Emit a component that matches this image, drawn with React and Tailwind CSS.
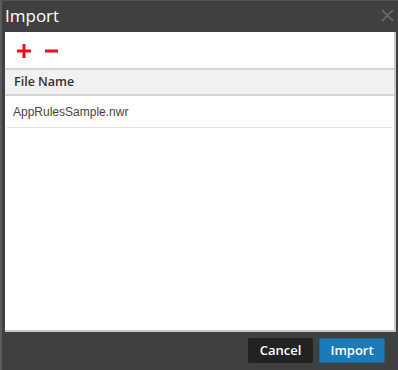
import { useState } from 'react';

const files = ['AppRulesSample.nwr'];

function PlusIcon() {
  return (
    <svg width="14" height="14" viewBox="0 0 14 14">
      <rect x="0" y="5.5" width="14" height="3" fill="#e8121c" />
      <rect x="5.5" y="0" width="3" height="14" fill="#e8121c" />
    </svg>
  );
}

function MinusIcon() {
  return (
    <svg width="13" height="14" viewBox="0 0 13 14">
      <rect x="0" y="5.5" width="13" height="3" fill="#e8121c" />
    </svg>
  );
}

export default function App() {
  const [selected] = useState(null);

  return (
    <div className="w-[398px] h-[370px] bg-[#404040] border-l-[2px] border-t border-l-[#5c5c5c] border-t-[#555] flex flex-col font-['Open_Sans',sans-serif]">
      <div className="h-[31px] flex items-center justify-between pl-[3px] pr-[3px]">
        <span className="text-[17px] text-white leading-none -mt-[2px]">Import</span>
        <svg width="13" height="13" viewBox="0 0 13 13" className="mr-[1px] -mt-[2px]">
          <path d="M1 1 L12 12 M12 1 L1 12" stroke="#6b6e73" strokeWidth="1.6" />
        </svg>
      </div>

      <div className="ml-[3px] mr-[2px] h-[300px] bg-white border-r-2 border-b-2 border-[#c8c8c8] flex flex-col">
        <div className="h-[36px] flex items-center gap-[14px] pl-[12px] pt-[1px]">
          <PlusIcon />
          <MinusIcon />
        </div>
        <div className="h-[28px] bg-[#f2f2f2] border-t-2 border-b-2 border-[#d4d4d4] flex items-center pl-[9px]">
          <span className="text-[12.5px] font-semibold text-[#333]">File Name</span>
        </div>
        {files.map((f) => (
          <div
            key={f}
            className={`h-[32px] mx-[2px] border-b border-[#e2e2e2] flex items-center pl-[6px] ${selected === f ? 'bg-[#eef5fb]' : ''}`}
          >
            <span className="text-[12px] text-[#444] font-['Liberation_Sans',sans-serif]">{f}</span>
          </div>
        ))}
      </div>

      <div className="flex justify-end gap-[6px] pr-[13px] pt-[6px]">
        <button className="w-[65px] h-[25px] rounded-[2px] bg-[#222] text-white text-[13px] font-semibold leading-none">
          Cancel
        </button>
        <button className="w-[66px] h-[25px] rounded-[2px] bg-[#1d7ab8] border border-[#16659c] text-white text-[13px] font-semibold leading-none">
          Import
        </button>
      </div>
    </div>
  );
}
